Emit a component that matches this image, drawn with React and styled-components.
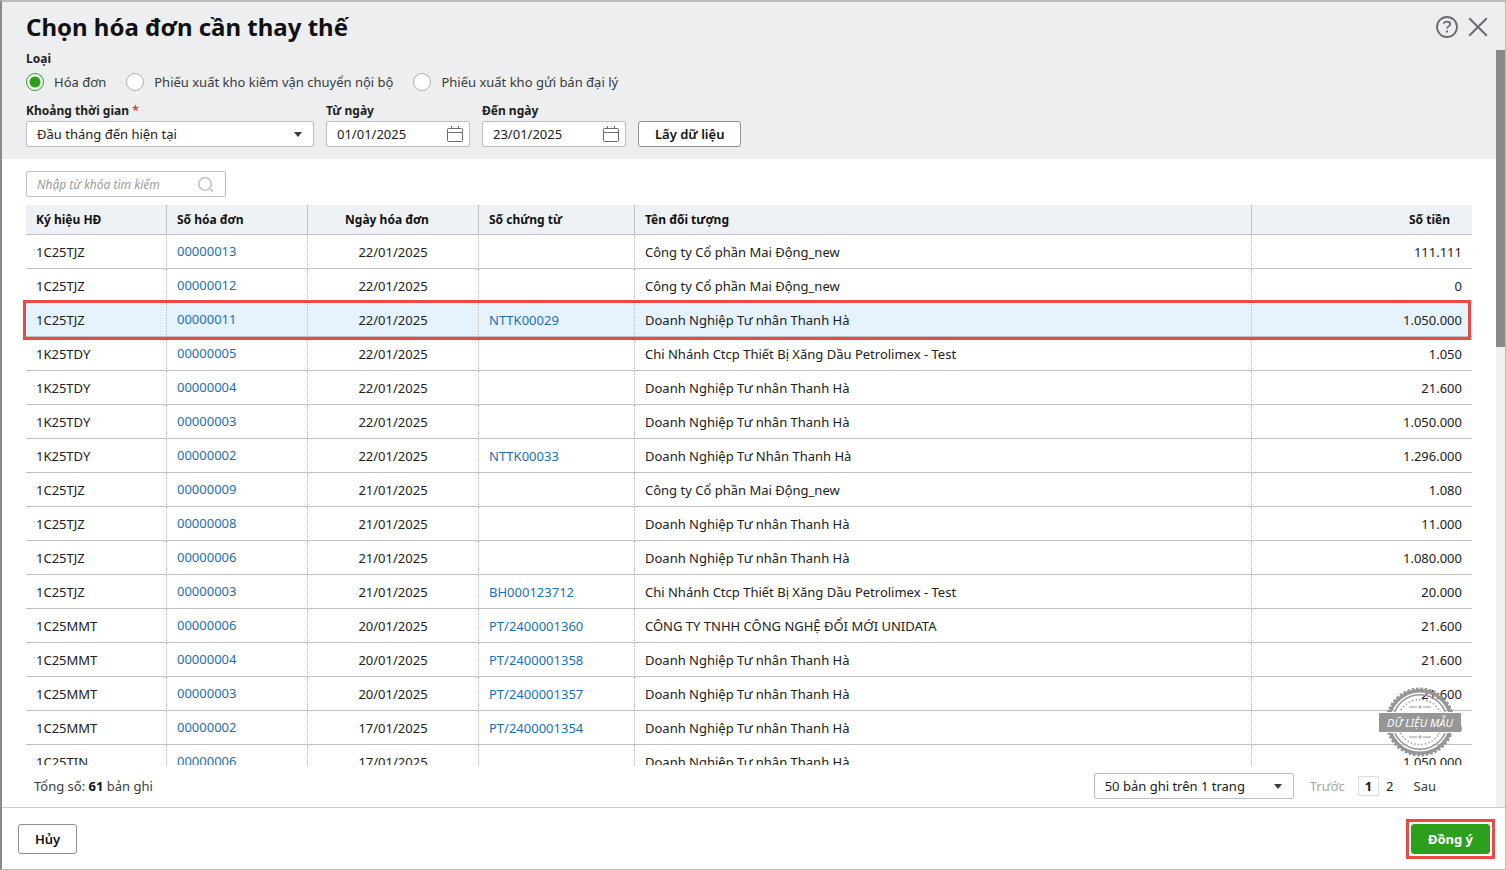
import React, { useState } from 'react';
import styled, { createGlobalStyle, css } from 'styled-components';

const GlobalStyle = createGlobalStyle`
  * {
    box-sizing: border-box;
  }
  body {
    margin: 0;
    background: white;
  }
  body,
  button,
  input,
  select {
    font-family: 'Noto Sans', sans-serif;
    font-size: 13px;
    color: #212121;
  }
`;

const Dialog = styled.div`
  display: flex;
  flex-direction: column;
  height: 100vh;
  border: 1px solid #bbbbbb;
  border-top-width: 2px;
  border-left: 2px solid #8a8a8a;
`;
const TitleBar = styled.header`
  display: flex;
  flex: none;
  justify-content: space-between;
  align-items: center;
  height: 48px;
  padding: 2px 16px 0 24px;
  background: #eceef0;
`;
const Title = styled.h1`
  margin: 0;
  font-size: 24px;
  font-weight: 700;
  line-height: 32px;
  color: #111111;
`;
const TitleActions = styled.div`
  display: flex;
  gap: 8px;
`;
const IconButton = styled.button`
  display: flex;
  padding: 0;
  border: 0;
  background: none;
  color: #6b6c72;
  cursor: pointer;
`;

const Main = styled.main`
  display: flex;
  flex: 1;
  min-height: 0;
`;
const Content = styled.div`
  display: flex;
  flex: 1;
  flex-direction: column;
  min-width: 0;
`;
const ScrollTrack = styled.div`
  flex: none;
  width: 9px;
  background: #f1f1f1;
`;
const ScrollThumb = styled.div`
  height: 297px;
  background: #888888;
`;

const Filters = styled.section`
  flex: none;
  padding: 0 24px 12px;
  background: #eceef0;
`;
const labelText = css`
  font-size: 12px;
  font-weight: 700;
  line-height: 18px;
`;
const TypeGroup = styled.fieldset`
  display: flex;
  gap: 20px;
  margin: 0 0 11px;
  padding: 0;
  border: 0;
`;
const TypeLegend = styled.legend`
  ${labelText};
  margin-bottom: 5px;
  padding: 0;
`;
const RadioLabel = styled.label`
  display: flex;
  align-items: center;
  gap: 10px;
  line-height: 18px;
  color: #393a3d;
`;
const Radio = styled.input`
  appearance: none;
  width: 18px;
  height: 18px;
  margin: 0;
  border: 1px solid #afafaf;
  border-radius: 50%;
  background: white;
  &:checked {
    border-color: #2ca01c;
    background: radial-gradient(circle, #2ca01c 5px, white 6px);
  }
`;
const FilterRow = styled.div`
  display: flex;
  align-items: flex-end;
  gap: 12px;
`;
const Field = styled.div`
  width: ${props => props.$width};
`;
const FieldLabel = styled.label`
  ${labelText};
  display: block;
  margin-bottom: 1px;
`;
const Required = styled.span`
  font-weight: 400;
  color: #ff0000;
`;
const Box = styled.div`
  position: relative;
  display: flex;
  align-items: center;
  width: ${props => props.$width || '100%'};
  height: 26px;
  border: 1px solid #babec5;
  border-radius: 2px;
  background: white;
  & > svg {
    position: absolute;
    right: ${props => props.$iconRight || '6px'};
    pointer-events: none;
  }
`;
const Select = styled.select`
  appearance: none;
  width: 100%;
  height: 24px;
  padding: 0 24px 0 10px;
  border: 0;
  background: none;
  line-height: 24px;
`;
const TextInput = styled.input`
  width: 100%;
  height: 24px;
  padding: 0 30px 0 10px;
  border: 0;
  background: none;
  &::placeholder {
    font-size: 12px;
    font-style: italic;
    color: #9a9a9a;
    opacity: 1;
  }
`;
const Button = styled.button`
  height: ${props => (props.$small ? '26px' : '30px')};
  padding: 0 16px;
  border: 1px solid #8d9096;
  border-radius: 3px;
  background: white;
  font-weight: 600;
  color: #111111;
  cursor: pointer;
`;
const PrimaryButton = styled(Button)`
  border-color: #2ca01c;
  background: #2ca01c;
  font-weight: 700;
  color: white;
`;

const Results = styled.section`
  position: relative;
  display: flex;
  flex: 1;
  flex-direction: column;
  min-height: 0;
  padding: 12px 24px 0;
`;
const TableWrap = styled.div`
  flex: 1;
  min-height: 0;
  margin: 8px 0 0 -3px;
  padding-left: 3px;
  overflow: hidden;
`;
const Table = styled.table`
  width: 100%;
  table-layout: fixed;
  border-spacing: 0;
`;
const Col = styled.col`
  width: ${props => props.$width};
`;
const Th = styled.th`
  height: 30px;
  padding: 0 22px 0 10px;
  border-right: 1px solid #c0c2c6;
  border-bottom: 1px solid #c0c2c6;
  background: #eef1f6;
  font-size: 12px;
  font-weight: 700;
  line-height: 18px;
  text-align: ${props => props.$align || 'left'};
  color: #111111;
  &:last-child {
    border-right: 0;
  }
`;
const Td = styled.td`
  height: 34px;
  padding: 1px 10px 0;
  border-right: 1px dotted #c0c0c0;
  border-bottom: 1px solid #c0c0c0;
  line-height: 18px;
  white-space: nowrap;
  text-align: ${props => props.$align || 'left'};
  &:last-child {
    border-right: 0;
  }
`;
const Row = styled.tr`
  ${props =>
    props.$selected &&
    css`
      position: relative;
      background: #e5f3ff;
      & > td:last-child::after {
        content: '';
        position: absolute;
        inset: -3px 1px -3px -3px;
        border: 3px solid #eb4a44;
      }
    `};
`;
const Link = styled.a`
  color: #1b6fb5;
  text-decoration: none;
`;
const NumberLink = styled(Link)`
  display: block;
  padding-bottom: 2px;
`;
const Stamp = styled.div`
  position: absolute;
  right: 34px;
  bottom: 49px;
  display: flex;
  align-items: center;
  justify-content: center;
  width: 84px;
  height: 72px;
  & > svg {
    position: absolute;
  }
`;
const StampText = styled.span`
  position: relative;
  width: 82px;
  border-top: 1px solid white;
  border-bottom: 1px solid white;
  background: #969696;
  font-size: 11px;
  font-style: italic;
  line-height: 19px;
  text-align: center;
  white-space: nowrap;
  color: white;
`;

const Pager = styled.div`
  display: flex;
  flex: none;
  align-items: center;
  justify-content: space-between;
  height: 42px;
  padding: 0 36px 0 8px;
  line-height: 18px;
  color: #393a3d;
`;
const Total = styled.b`
  color: #111111;
`;
const PagerNav = styled.nav`
  display: flex;
  align-items: center;
`;
const PageStep = styled.button`
  padding: 0;
  border: 0;
  background: none;
  margin: ${props => (props.disabled ? '0 13px 0 16px' : '0 0 0 13px')};
  color: ${props => (props.disabled ? '#a5a5a5' : '#393a3d')};
`;
const PageNumber = styled.button`
  height: 20px;
  padding: 0 6px;
  border: 1px solid ${props => (props.$current ? '#dddddd' : 'transparent')};
  background: none;
  font-weight: ${props => (props.$current ? 700 : 400)};
  line-height: 18px;
`;
const Footer = styled.footer`
  display: flex;
  flex: none;
  align-items: center;
  justify-content: space-between;
  height: 62px;
  padding: 0 10px 0 16px;
  border-top: 1px solid #cccccc;
`;
const Highlight = styled.div`
  display: flex;
  padding: 2px;
  border: 3px solid #eb4a44;
`;

const HelpIcon = () => (
  <svg width="24" height="24" viewBox="0 0 24 24" fill="none" stroke="currentColor">
    <circle cx="12" cy="12" r="10" strokeWidth="1.8" />
    <path d="M8.800 8.800c0-1.300 1.200-2.100 3.200-2.100s3.200.8 3.200 2.400c0 2.200-3.200 2-3.200 4.500" strokeWidth="1.800" />
    <path d="M12 15.400v2.200" strokeWidth="2" />
  </svg>
);

const CloseIcon = () => (
  <svg width="22" height="24" viewBox="0 0 22 24" fill="none" stroke="currentColor" strokeWidth="2">
    <path d="M2.200 3.200l17.600 17.600M19.800 3.200L2.200 20.800" />
  </svg>
);

const CaretIcon = () => (
  <svg width="8" height="5" viewBox="0 0 8 5" fill="#393a3d">
    <path d="M0 0h8L4 5z" />
  </svg>
);

const CalendarIcon = () => (
  <svg width="16" height="17" viewBox="0 0 16 17" fill="none" stroke="#6b6c72">
    <rect x=".5" y="2.500" width="15" height="13" rx="1" />
    <path d="M.5 6.500h15M4.500 0v3M11.500 0v3" />
  </svg>
);

const SearchIcon = () => (
  <svg width="18" height="18" viewBox="0 0 18 18" fill="none" stroke="#c8c8c8" strokeWidth="1.800">
    <circle cx="8" cy="9" r="6.300" />
    <path d="M13.600 14.200l2.400 2.400" strokeWidth="2.200" />
  </svg>
);

const SealIcon = () => (
  <svg width="72" height="72" viewBox="0 0 72 72" fill="none" stroke="#969696">
    <path d="M22 14A26 26 0 1 0 50 14z" fill="white" stroke="none" />
    <circle cx="36" cy="36" r="33" strokeWidth="3" strokeDasharray="2.600 1.720" />
    <circle cx="36" cy="36" r="31.300" strokeWidth="3.500" />
    <circle cx="36" cy="36" r="27.300" strokeWidth="1.500" />
    <circle cx="36" cy="36" r="22.500" strokeWidth="1.400" strokeDasharray="1.400 2.200" />
    <path d="M25 21h8M39 21h8M25 51h8M39 51h8" />
    <path d="M36 19.300v3.400M34.300 21h3.400M36 49.300v3.400M34.300 51h3.400" />
  </svg>
);

const TYPES = ['Hóa đơn', 'Phiếu xuất kho kiêm vận chuyển nội bộ', 'Phiếu xuất kho gửi bán đại lý'];

const THANH_HA = 'Doanh Nghiệp Tư nhân Thanh Hà';
const MAI_DONG = 'Công ty Cổ phần Mai Động_new';
const PETROLIMEX = 'Chi Nhánh Ctcp Thiết Bị Xăng Dầu Petrolimex - Test';

const INVOICES = [
  ['1C25TJZ', '00000013', '22/01/2025', '', MAI_DONG, '111.111'],
  ['1C25TJZ', '00000012', '22/01/2025', '', MAI_DONG, '0'],
  ['1C25TJZ', '00000011', '22/01/2025', 'NTTK00029', THANH_HA, '1.050.000'],
  ['1K25TDY', '00000005', '22/01/2025', '', PETROLIMEX, '1.050'],
  ['1K25TDY', '00000004', '22/01/2025', '', THANH_HA, '21.600'],
  ['1K25TDY', '00000003', '22/01/2025', '', THANH_HA, '1.050.000'],
  ['1K25TDY', '00000002', '22/01/2025', 'NTTK00033', 'Doanh Nghiệp Tư Nhân Thanh Hà', '1.296.000'],
  ['1C25TJZ', '00000009', '21/01/2025', '', MAI_DONG, '1.080'],
  ['1C25TJZ', '00000008', '21/01/2025', '', THANH_HA, '11.000'],
  ['1C25TJZ', '00000006', '21/01/2025', '', THANH_HA, '1.080.000'],
  ['1C25TJZ', '00000003', '21/01/2025', 'BH000123712', PETROLIMEX, '20.000'],
  ['1C25MMT', '00000006', '20/01/2025', 'PT/2400001360', 'CÔNG TY TNHH CÔNG NGHỆ ĐỔI MỚI UNIDATA', '21.600'],
  ['1C25MMT', '00000004', '20/01/2025', 'PT/2400001358', THANH_HA, '21.600'],
  ['1C25MMT', '00000003', '20/01/2025', 'PT/2400001357', THANH_HA, '21.600'],
  ['1C25MMT', '00000002', '17/01/2025', 'PT/2400001354', THANH_HA, '0'],
  ['1C25TIN', '00000006', '17/01/2025', '', THANH_HA, '1.050.000']
];

const DateField = ({ id, label, value }) => (
  <Field $width="144px">
    <FieldLabel htmlFor={id}>{label}</FieldLabel>
    <Box>
      <TextInput id={id} defaultValue={value} />
      <CalendarIcon />
    </Box>
  </Field>
);

const App = () => {
  const [type, setType] = useState(TYPES[0]);
  const [selected, setSelected] = useState(2);

  return (
    <Dialog role="dialog" aria-labelledby="title">
      <GlobalStyle />
      <TitleBar>
        <Title id="title">Chọn hóa đơn cần thay thế</Title>
        <TitleActions>
          <IconButton type="button" aria-label="Trợ giúp">
            <HelpIcon />
          </IconButton>
          <IconButton type="button" aria-label="Đóng">
            <CloseIcon />
          </IconButton>
        </TitleActions>
      </TitleBar>
      <Main>
        <Content>
          <Filters>
            <TypeGroup>
              <TypeLegend>Loại</TypeLegend>
              {TYPES.map(name => (
                <RadioLabel key={name}>
                  <Radio type="radio" name="type" checked={type === name} onChange={() => setType(name)} />
                  {name}
                </RadioLabel>
              ))}
            </TypeGroup>
            <FilterRow>
              <Field $width="288px">
                <FieldLabel htmlFor="period">
                  Khoảng thời gian <Required>*</Required>
                </FieldLabel>
                <Box $iconRight="11px">
                  <Select id="period">
                    <option>Đầu tháng đến hiện tại</option>
                  </Select>
                  <CaretIcon />
                </Box>
              </Field>
              <DateField id="from" label="Từ ngày" value="01/01/2025" />
              <DateField id="to" label="Đến ngày" value="23/01/2025" />
              <Button type="button" $small>
                Lấy dữ liệu
              </Button>
            </FilterRow>
          </Filters>
          <Results>
            <Box $width="200px" $iconRight="10px">
              <TextInput type="text" aria-label="Tìm kiếm" placeholder="Nhập từ khóa tìm kiếm" />
              <SearchIcon />
            </Box>
            <TableWrap>
              <Table>
                <colgroup>
                  <Col $width="141px" />
                  <Col $width="141px" />
                  <Col $width="171px" />
                  <Col $width="156px" />
                  <Col />
                  <Col $width="220px" />
                </colgroup>
                <thead>
                  <tr>
                    <Th>Ký hiệu HĐ</Th>
                    <Th>Số hóa đơn</Th>
                    <Th $align="center">Ngày hóa đơn</Th>
                    <Th>Số chứng từ</Th>
                    <Th>Tên đối tượng</Th>
                    <Th $align="right">Số tiền</Th>
                  </tr>
                </thead>
                <tbody>
                  {INVOICES.map(([symbol, number, date, voucher, customer, amount], i) => (
                    <Row key={i} $selected={i === selected} onClick={() => setSelected(i)}>
                      <Td>{symbol}</Td>
                      <Td>
                        <NumberLink href="#">{number}</NumberLink>
                      </Td>
                      <Td $align="center">{date}</Td>
                      <Td>{voucher && <Link href="#">{voucher}</Link>}</Td>
                      <Td>{customer}</Td>
                      <Td $align="right">{amount}</Td>
                    </Row>
                  ))}
                </tbody>
              </Table>
            </TableWrap>
            <Pager>
              <span>
                Tổng số: <Total>61</Total> bản ghi
              </span>
              <PagerNav>
                <Box $width="200px" $iconRight="11px">
                  <Select aria-label="Số bản ghi">
                    <option>50 bản ghi trên 1 trang</option>
                  </Select>
                  <CaretIcon />
                </Box>
                <PageStep type="button" disabled>
                  Trước
                </PageStep>
                <PageNumber type="button" $current>
                  1
                </PageNumber>
                <PageNumber type="button">2</PageNumber>
                <PageStep type="button">Sau</PageStep>
              </PagerNav>
            </Pager>
            <Stamp>
              <SealIcon />
              <StampText>DỮ LIỆU MẪU</StampText>
            </Stamp>
          </Results>
        </Content>
        <ScrollTrack>
          <ScrollThumb />
        </ScrollTrack>
      </Main>
      <Footer>
        <Button type="button">Hủy</Button>
        <Highlight>
          <PrimaryButton type="button">Đồng ý</PrimaryButton>
        </Highlight>
      </Footer>
    </Dialog>
  );
};

export default App;
